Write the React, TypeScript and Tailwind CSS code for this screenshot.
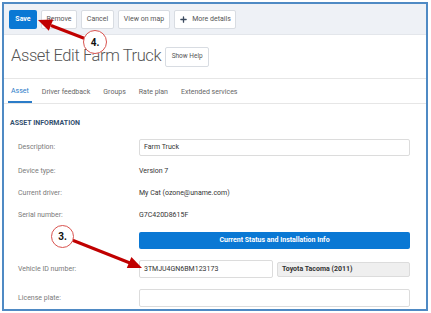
import { Plus } from "lucide-react";

const font = { fontFamily: "Roboto, 'Liberation Sans', sans-serif" };

function Row({ label, children, h = "h-[21px]" }: { label: string; children: React.ReactNode; h?: string }) {
  return (
    <div className={`flex items-center ${h}`}>
      <div className="w-[135px] pl-[14px] text-[7px] text-[#7a7a7a]">{label}</div>
      <div className="flex-1 pr-[16px] text-[7px] text-[#333]">{children}</div>
    </div>
  );
}

export default function App() {
  const tabs = ["Asset", "Driver feedback", "Groups", "Rate plan", "Extended services"];

  return (
    <div className="relative w-[431px] h-[313px] bg-white p-[2px] pr-[3px]" style={font}>
      <div className="h-full border-2 border-[#4f8ac4] bg-white flex flex-col overflow-hidden">
        {/* toolbar */}
        <div className="h-[31px] shrink-0 bg-[#eef1f6] flex items-center gap-[4px] pl-[5px] border-b border-[#e3e6eb]">
          <button className="h-[19px] w-[28px] rounded-[2px] bg-[#0a78d4] text-white text-[7px] font-bold">Save</button>
          <button className="h-[19px] w-[36px] rounded-[2px] bg-white border border-[#d8dce2] text-[#555] text-[7px]">Remove</button>
          <button className="h-[19px] w-[33px] rounded-[2px] bg-white border border-[#d8dce2] text-[#555] text-[7px]">Cancel</button>
          <button className="h-[19px] w-[52px] rounded-[2px] bg-white border border-[#d8dce2] text-[#555] text-[7px]">View on map</button>
          <button className="h-[19px] w-[62px] justify-center rounded-[2px] bg-white border border-[#d8dce2] text-[#555] text-[7px] flex items-center gap-[4px]">
            <Plus size={9} strokeWidth={3.5} className="text-[#3b4a5e]" />
            More details
          </button>
        </div>

        {/* title */}
        <div className="h-[44px] shrink-0 flex items-center pl-[7px] gap-[4px] border-b border-[#e6e6e6]">
          <h1 className="text-[16.5px] font-light text-[#555] leading-none tracking-[-0.4px]">Asset Edit Farm Truck</h1>
          <button className="h-[20px] w-[44px] rounded-[2px] bg-white border border-[#d8dce2] text-[#555] text-[6.5px]">Show Help</button>
        </div>

        {/* tabs */}
        <div className="h-[25px] shrink-0 flex items-end pl-[4px] border-b border-[#e6e6e6]">
          {tabs.map((t, i) => (
            <div
              key={t}
              className={`h-full flex items-center pt-[2px] px-[3px] mr-[7px] text-[7px] ${i === 0 ? "text-[#2b7cc8] border-b-2 border-[#2b7cc8]" : "text-[#666]"}`}
            >
              {t}
            </div>
          ))}
        </div>

        {/* form */}
        <div className="pt-[14px]">
          <div className="pl-[6px] text-[7px] font-bold text-[#33506e] mb-[6px]">ASSET INFORMATION</div>
          <Row label="Description:" h="h-[26px]">
            <div className="h-[17px] border border-[#dcdcdc] rounded-[2px] flex items-center px-[4px]">Farm Truck</div>
          </Row>
          <Row label="Device type:" h="h-[22px]">Version 7</Row>
          <Row label="Current driver:" h="h-[22px]">My Cat (ozone@uname.com)</Row>
          <Row label="Serial number:" h="h-[21px]">G7C420D8615F</Row>
          <Row label="" h="h-[30px]">
            <div className="h-[17px] bg-[#0a78d4] rounded-[2px] flex items-center justify-center text-white font-bold">
              Current Status and Installation Info
            </div>
          </Row>
          <Row label="Vehicle ID number:" h="h-[27px]">
            <div className="flex gap-[4px] items-center">
              <div className="w-[134px] h-[18px] border border-[#dcdcdc] rounded-[2px] flex items-center px-[4px]">3TMJU4GN6BM123173</div>
              <div className="flex-1 h-[15px] bg-[#efefef] border border-[#dcdcdc] rounded-[2px] flex items-center px-[4px] font-bold">Toyota Tacoma (2011)</div>
            </div>
          </Row>
          <Row label="License plate:" h="h-[31px]">
            <div className="h-[18px] border border-[#dcdcdc] rounded-[2px]"></div>
          </Row>
        </div>
      </div>

      {/* annotations */}
      <svg className="absolute inset-0 pointer-events-none" width="431" height="313">
        <line x1="86" y1="39" x2="51" y2="25.5" stroke="#c00000" strokeWidth="3" />
        <polygon points="38,20 53.2,19.5 48.8,30.7" fill="#c00000" />
        <circle cx="95" cy="42" r="11.5" fill="white" stroke="#d9534f" strokeWidth="1" />
        <text x="95" y="45.5" textAnchor="middle" fontSize="10" fontWeight="bold" fill="#111" style={font}>4.</text>
        <line x1="72" y1="240" x2="130" y2="263" stroke="#c00000" strokeWidth="3" />
        <polygon points="142,268 126.8,268.1 131.4,257.1" fill="#c00000" />
        <circle cx="62.5" cy="236.5" r="11" fill="white" stroke="#d9534f" strokeWidth="1" />
        <text x="62.5" y="240" textAnchor="middle" fontSize="10" fontWeight="bold" fill="#111" style={font}>3.</text>
      </svg>
    </div>
  );
}
